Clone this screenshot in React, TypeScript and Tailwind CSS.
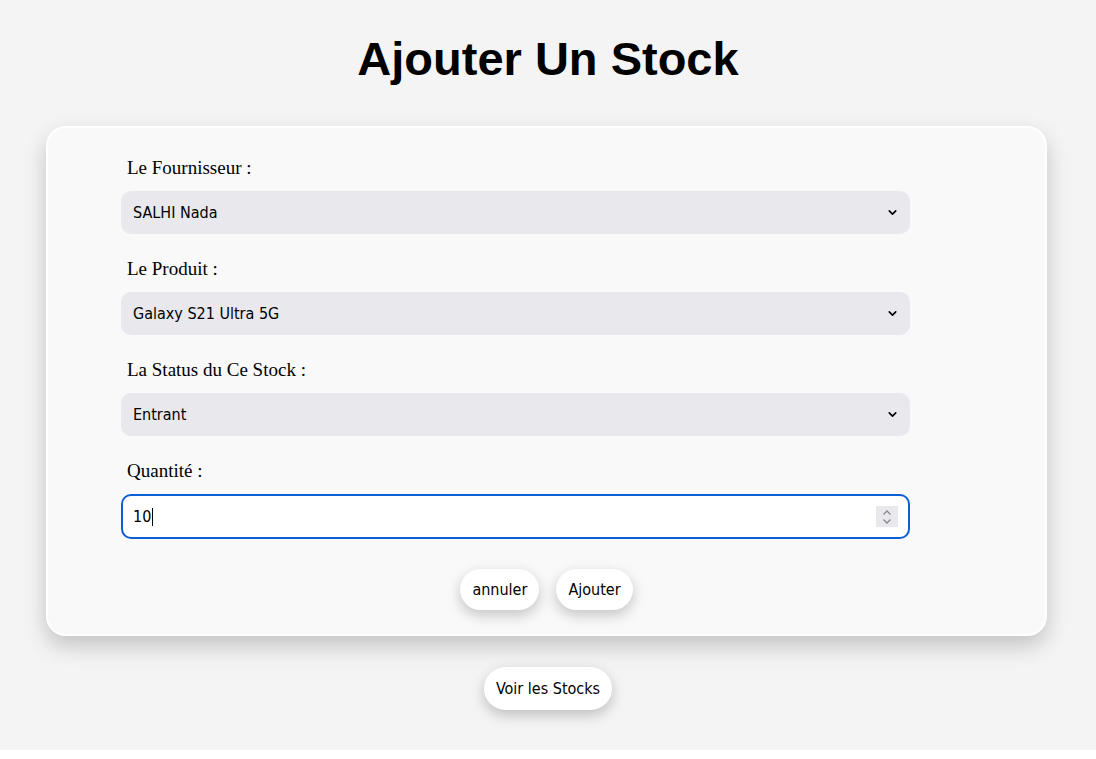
import { ChevronDown } from "lucide-react";

const fournisseurs = ["SALHI Nada"];
const produits = ["Galaxy S21 Ultra 5G"];
const statuts = ["Entrant"];

const uiFont = { fontFamily: '"DejaVu Sans Condensed", "DejaVu Sans", sans-serif' };
const labelFont = { fontFamily: '"Liberation Serif", serif' };

function FakeSelect({ value }: { value: string }) {
  return (
    <div
      className="flex items-center justify-between w-[789px] h-[43px] rounded-[10px] bg-[#e9e8ed] pl-[12px] pr-[11px] text-[16px] text-black"
      style={uiFont}
    >
      <span>{value}</span>
      <ChevronDown size={13} strokeWidth={3} className="text-black" />
    </div>
  );
}

function Field({ label, children, first }: { label: string; children: React.ReactNode; first?: boolean }) {
  return (
    <div className={first ? "" : "mt-[24px]"}>
      <p className="pl-[6px] text-[19px] leading-[22px] text-black" style={labelFont}>
        {label}
      </p>
      <div className="mt-[12px]">{children}</div>
    </div>
  );
}

function PillButton({ children }: { children: React.ReactNode }) {
  return (
    <button
      className="h-[41px] px-[12px] rounded-full bg-white text-[16px] text-black shadow-[0_5px_14px_rgba(0,0,0,0.22)]"
      style={uiFont}
    >
      {children}
    </button>
  );
}

export default function App() {
  return (
    <div className="min-h-[750px] bg-[#f4f4f4] pt-[31px] flex flex-col items-center">
      <h1
        className="text-[47px] leading-[55px] font-bold text-black"
        style={{ fontFamily: '"Liberation Sans", Arial, sans-serif' }}
      >
        Ajouter Un Stock
      </h1>

      <div className="self-start ml-[46px] mt-[40px] w-[1001px] rounded-[20px] border-2 border-white bg-[#f9f9f9] pt-[29px] pb-[24px] shadow-[0_10px_22px_rgba(0,0,0,0.2)]">
        <div className="ml-[73px]">
          <Field label="Le Fournisseur :" first>
            <FakeSelect value={fournisseurs[0]} />
          </Field>
          <Field label="Le Produit :">
            <FakeSelect value={produits[0]} />
          </Field>
          <Field label="La Status du Ce Stock :">
            <FakeSelect value={statuts[0]} />
          </Field>
          <div className="mt-[24px]">
            <p className="pl-[6px] text-[19px] leading-[22px] text-black" style={labelFont}>
              Quantité :
            </p>
            <div
              className="mt-[12px] flex items-center justify-between w-[789px] h-[45px] rounded-[10px] border-2 border-[#0b5fd6] bg-white pl-[10px] pr-[10px] text-[16px] text-black"
              style={uiFont}
            >
              <span className="flex items-center">
                10<span className="ml-[1px] inline-block w-px h-[18px] bg-black" />
              </span>
              <span className="flex flex-col items-center justify-center w-[22px] h-[21px] bg-[#e9e8ed]">
                <svg width="10" height="16" viewBox="0 0 10 16" fill="none" stroke="#8a8a8e" strokeWidth="1.4">
                  <path d="M1.5 5.5 L5 2 L8.5 5.5" />
                  <path d="M1.5 10.5 L5 14 L8.5 10.5" />
                </svg>
              </span>
            </div>
          </div>
        </div>

        <div className="mt-[30px] flex justify-center gap-[17px]">
          <PillButton>annuler</PillButton>
          <PillButton>Ajouter</PillButton>
        </div>
      </div>

      <div className="mt-[31px]">
        <button
          className="h-[43px] px-[12px] rounded-full bg-white text-[16px] text-black shadow-[0_5px_14px_rgba(0,0,0,0.22)]"
          style={uiFont}
        >
          Voir les Stocks
        </button>
      </div>
    </div>
  );
}
